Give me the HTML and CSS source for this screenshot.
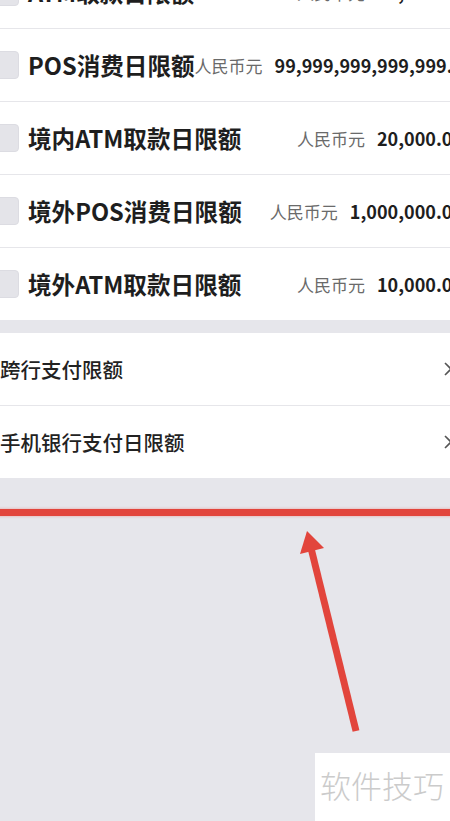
FILE: index.html
```html
<!DOCTYPE html>
<html lang="zh-CN">
<head>
<meta charset="utf-8">
<title>限额设置</title>
<link rel="stylesheet" href="styles.css">
</head>
<body>
<div class="page">
  <div class="list">
    <div class="row">
      <span class="check"></span>
      <span class="title">ATM取款日限额</span>
      <span class="value"><span class="cur">人民币元</span><span class="amt">20,000.00</span></span>
    </div>
    <div class="row">
      <span class="check"></span>
      <span class="title">POS消费日限额</span>
      <span class="value"><span class="cur">人民币元</span><span class="amt">99,999,999,999,999.99</span></span>
    </div>
    <div class="row">
      <span class="check"></span>
      <span class="title">境内ATM取款日限额</span>
      <span class="value"><span class="cur">人民币元</span><span class="amt">20,000.00</span></span>
    </div>
    <div class="row">
      <span class="check"></span>
      <span class="title">境外POS消费日限额</span>
      <span class="value"><span class="cur">人民币元</span><span class="amt">1,000,000.00</span></span>
    </div>
    <div class="row">
      <span class="check"></span>
      <span class="title">境外ATM取款日限额</span>
      <span class="value"><span class="cur">人民币元</span><span class="amt">10,000.00</span></span>
    </div>
  </div>
  <div class="list menu">
    <div class="mrow">
      <span class="mtitle">跨行支付限额</span>
      <svg class="chev" width="8" height="14" viewBox="0 0 8 14"><path d="M1 1 L7 7 L1 13" fill="none" stroke="#555" stroke-width="1.6"/></svg>
    </div>
    <div class="mrow">
      <span class="mtitle">手机银行支付日限额</span>
      <svg class="chev" width="8" height="14" viewBox="0 0 8 14"><path d="M1 1 L7 7 L1 13" fill="none" stroke="#555" stroke-width="1.6"/></svg>
    </div>
  </div>
  <div class="redline"></div>
</div>
<svg class="arrow" width="450" height="821" viewBox="0 0 450 821">
  <line x1="356" y1="731" x2="311" y2="548" stroke="#e2453c" stroke-width="7" stroke-linecap="butt"/>
  <polygon points="307,531 300,554 324,548" fill="#e2453c"/>
</svg>
<div class="watermark">软件技巧</div>
</body>
</html>
```
FILE: styles.css
```css
html, body {
  margin: 0;
  padding: 0;
}
body {
  width: 450px;
  height: 821px;
  overflow: hidden;
  background: #e6e6eb;
  font-family: "Noto Sans CJK SC", "Noto Sans", sans-serif;
  position: relative;
}
.page {
  width: 486px;
  margin-left: -12px;
  margin-top: -44px;
}
.list {
  background: #ffffff;
}
.row {
  display: flex;
  align-items: center;
  height: 72px;
  padding-right: 11px;
  border-bottom: 1px solid #e6e6ea;
  white-space: nowrap;
}
.row:last-child {
  border-bottom: none;
}
.check {
  flex: 0 0 31px;
  height: 28px;
  box-sizing: border-box;
  background: #e4e4e9;
  border: 1px solid #dcdce2;
  border-radius: 4px;
  margin-right: 9px;
}
.title {
  flex-shrink: 0;
  font-size: 23.6px;
  font-weight: 700;
  color: #1e1e1e;
}
.value {
  flex-shrink: 0;
  margin-left: auto;
  display: flex;
  align-items: center;
}
.cur {
  font-size: 17px;
  color: #6a6a6a;
  margin-right: 12px;
}
.amt {
  font-size: 18px;
  font-weight: 700;
  color: #1e1e1e;
}
.menu {
  margin-top: 13px;
}
.mrow {
  display: flex;
  align-items: center;
  height: 72px;
  padding-left: 12px;
  padding-right: 22px;
  border-bottom: 1px solid #e6e6ea;
}
.mrow:last-child {
  border-bottom: none;
}
.mtitle {
  font-size: 20.5px;
  font-weight: 500;
  color: #222222;
}
.chev {
  margin-left: auto;
}
.redline {
  margin-top: 31px;
  height: 7px;
  background: #e2453c;
  box-shadow: 0 0 3px rgba(226, 69, 60, 0.45);
}
.arrow {
  position: absolute;
  left: 0;
  top: 0;
}
.watermark {
  position: absolute;
  left: 315px;
  top: 753px;
  width: 135px;
  height: 68px;
  background: #ffffff;
  box-sizing: border-box;
  padding-left: 5px;
  padding-top: 12px;
  font-size: 31px;
  font-weight: 300;
  color: #cbcbcb;
  line-height: 40px;
  white-space: nowrap;
}
```
